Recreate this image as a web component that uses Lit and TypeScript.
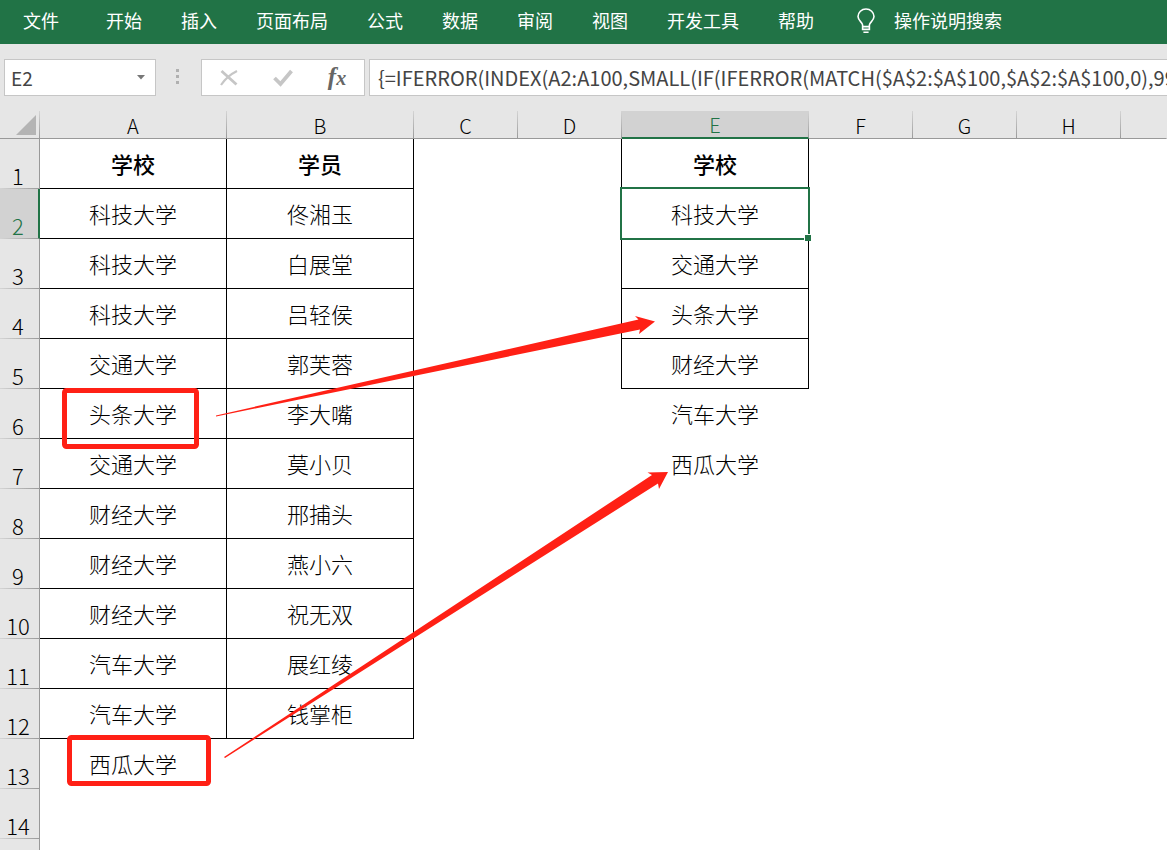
import { LitElement, html, css, nothing } from "lit";
import { customElement, property } from "lit/decorators.js";
import { classMap } from "lit/directives/class-map.js";

const COLUMNS = ["A", "B", "C", "D", "E", "F", "G", "H", ""];
const WIDE = new Set(["A", "B", "E"]);
const SELECTED = { column: "E", row: 2 };
const LABELLED_ROWS = 14;

const DATA: Record<string, string[]> = {
  A: ["学校", "科技大学", "科技大学", "科技大学", "交通大学", "头条大学", "交通大学", "财经大学", "财经大学", "财经大学", "汽车大学", "汽车大学", "西瓜大学"],
  B: ["学员", "佟湘玉", "白展堂", "吕轻侯", "郭芙蓉", "李大嘴", "莫小贝", "邢捕头", "燕小六", "祝无双", "展红绫", "钱掌柜"],
  E: ["学校", "科技大学", "交通大学", "头条大学", "财经大学", "汽车大学", "西瓜大学"],
};

@customElement("ribbon-tabs")
export class RibbonTabs extends LitElement {
  static styles = css`
    .tabs {
      display: flex;
      align-items: center;
      height: 44px;
      box-sizing: border-box;
      padding: 0 3px 4px;
      background: #217346;
      overflow: hidden;
    }
    .tab {
      flex: none;
      display: flex;
      align-items: center;
      margin: 0;
      border: 0;
      padding: 0 19px 0 20px;
      background: none;
      color: #fff;
      font: 18px/26px "Noto Sans CJK SC", sans-serif;
      white-space: nowrap;
    }
    .file {
      margin-right: 8px;
    }
    .search {
      gap: 19px;
      padding-left: 24px;
    }
    .bulb {
      width: 18px;
      height: 26px;
    }
  `;
  render() {
    const tabs = ["开始", "插入", "页面布局", "公式", "数据", "审阅", "视图", "开发工具", "帮助"];
    return html`<nav class="tabs">
      <button class="tab file">文件</button>
      ${tabs.map((t) => html`<button class="tab">${t}</button>`)}
      <button class="tab search">
        <svg class="bulb" viewBox="0 0 18 26" fill="none" stroke="#fff" stroke-width="1.6" aria-hidden="true">
          <path d="M5.6 19.600V18C5.600 15.600 1 13.600 1 9.600A8 7.600 0 0 1 17 9.600C17 13.600 12.400 15.600 12.400 18V19.600M5.600 19.600V22.400H12.400V19.600H5.600M6.400 25.200H11.600" />
        </svg>
        操作说明搜索
      </button>
    </nav>`;
  }
}

@customElement("formula-bar")
export class FormulaBar extends LitElement {
  @property() cell = "";
  @property() formula = "";
  static styles = css`
    .bar {
      display: flex;
      height: 67px;
      box-sizing: border-box;
      padding: 15px 0 15px 4px;
      background: #e6e6e6;
    }
    .box {
      display: flex;
      align-items: center;
      box-sizing: border-box;
      border: 1px solid #c6c6c6;
      background: #fff;
    }
    .name {
      width: 152px;
    }
    .text {
      flex: 1;
      min-width: 0;
      height: 100%;
      box-sizing: border-box;
      border: 0;
      padding: 0 0 0 8px;
      background: none;
      color: #444;
      font: 20px/26px "Noto Sans CJK SC", sans-serif;
      outline: 0;
    }
    .ref {
      padding-left: 6px;
      font-size: 19px;
    }
    .icon {
      display: flex;
      align-items: center;
      justify-content: center;
      border: 0;
      padding: 0;
      background: none;
    }
    .drop {
      width: 28px;
    }
    .dots {
      width: 45px;
      display: flex;
      flex-direction: column;
      align-items: center;
      justify-content: center;
      gap: 3px;
      padding: 0 2px 2px 0;
      box-sizing: border-box;
    }
    .dot {
      width: 3px;
      height: 3px;
      background: #b0b0b0;
    }
    .tools {
      width: 164px;
      margin-right: 4px;
    }
    .tools .icon {
      flex: 1;
    }
    .fx {
      align-items: baseline;
      color: #666;
      font: italic bold 25px/26px "Liberation Serif", serif;
    }
    .fx small {
      font-size: 20px;
    }
    .entry {
      flex: 1;
      min-width: 0;
      border-right: 0;
    }
  `;
  render() {
    return html`<div class="bar">
      <div class="box name">
        <input class="text ref" aria-label="名称框" .value=${this.cell} />
        <button class="icon drop" aria-label="展开名称框">
          <svg width="8" height="5" viewBox="0 0 8 5"><path d="M0 0H8L4 4.500Z" fill="#777" /></svg>
        </button>
      </div>
      <div class="dots"><i class="dot"></i><i class="dot"></i><i class="dot"></i></div>
      <div class="box tools">
        <button class="icon" aria-label="取消">
          <svg width="20" height="18" viewBox="0 0 20 18" fill="none" stroke="#c6c6c6">
            <path d="M2.500 2L17.500 15.500" stroke-width="2.800" /><path d="M18 2C12 5 6 10 2 16" stroke-width="2.200" />
          </svg>
        </button>
        <button class="icon" aria-label="输入">
          <svg width="20" height="18" viewBox="0 0 20 18" fill="none" stroke="#c6c6c6" stroke-width="3.800">
            <path d="M1.500 9L7.500 15L18.500 2" />
          </svg>
        </button>
        <button class="icon fx" aria-label="插入函数"><span>f</span><small>x</small></button>
      </div>
      <div class="box entry"><input class="text" aria-label="编辑栏" .value=${this.formula} /></div>
    </div>`;
  }
}

@customElement("sheet-grid")
export class SheetGrid extends LitElement {
  static styles = css`
    :host {
      display: block;
      position: relative;
      overflow: hidden;
      background: #fff;
    }
    .grid {
      width: 100%;
      table-layout: fixed;
      border-collapse: separate;
      border-spacing: 0;
      color: #000;
      font: 300 22px/26px "Noto Sans CJK SC", sans-serif;
    }
    .heads {
      width: 40px;
    }
    .wide {
      width: 187px;
    }
    .narrow {
      width: 104px;
    }
    th,
    td {
      box-sizing: border-box;
      padding: 0;
      border: 0 solid transparent;
      border-width: 0 1px 1px 0;
      text-align: center;
      vertical-align: middle;
    }
    td {
      padding-bottom: 2px;
    }
    .col,
    .corner {
      height: 28px;
      background: linear-gradient(#d4d4d4, #999) right / 1px 100% no-repeat #e6e6e6;
      background-origin: border-box;
      border-bottom-color: #999;
      font-size: 20px;
      font-weight: 300;
      line-height: 25px;
    }
    .col {
      padding-top: 2px;
    }
    .col:last-child {
      background-image: none;
    }
    .corner svg {
      display: block;
      margin: 4px 3px 3px auto;
    }
    .col.on {
      background-color: #d2d2d2;
      border-bottom: 2px solid #217346;
      line-height: 24px;
      color: #217346;
    }
    .row {
      height: 50px;
      background: linear-gradient(90deg, #d4d4d4, #999) bottom / 100% 1px no-repeat #e6e6e6;
      background-origin: border-box;
      border-right-color: #999;
      padding: 22px 3px 0 0;
      font-weight: 300;
    }
    .row.on {
      background-color: #d2d2d2;
      border-right: 2px solid #217346;
      padding-right: 2px;
      color: #217346;
    }
    .title {
      font-weight: 500;
    }
    .right {
      border-right-color: #000;
    }
    .bottom {
      border-bottom-color: #000;
    }
    .side {
      border-bottom-width: 0;
    }
    .active {
      position: relative;
    }
    .cursor {
      position: absolute;
      inset: -2px;
      border: 2px solid #217346;
    }
    .handle {
      position: absolute;
      right: -3px;
      bottom: -3px;
      width: 6px;
      height: 6px;
      border: 1px solid #fff;
      border-width: 1px 0 0 1px;
      background: #217346;
    }
    .marks {
      position: absolute;
      left: 0;
      top: 0;
      pointer-events: none;
    }
  `;

  private cell(column: string, row: number) {
    const text = DATA[column]?.[row - 1] ?? "";
    const lastRow = column === "E" ? 5 : 12;
    const framed = column in DATA && row <= lastRow;
    const side = column === "D" && row <= 5;
    const active = column === SELECTED.column && row === SELECTED.row;
    const classes = {
      title: row === 1,
      right: framed || side,
      bottom: framed,
      side,
      active,
    };
    return html`<td class=${classMap(classes)}>${text}${active
        ? html`<span class="cursor"><span class="handle"></span></span>`
        : nothing}</td>`;
  }

  render() {
    const rows = Array.from({ length: LABELLED_ROWS + 1 }, (_, i) => i + 1);
    return html`<table class="grid">
        <colgroup>
          <col class="heads" />
          ${COLUMNS.map((c) => html`<col class=${WIDE.has(c) ? "wide" : c ? "narrow" : ""} />`)}
        </colgroup>
        <thead>
          <tr>
            <th class="corner" aria-label="全选">
              <svg width="20" height="20" viewBox="0 0 20 20"><path d="M20 0V20H0Z" fill="#b4b4b4" /></svg>
            </th>
            ${COLUMNS.map((c) => html`<th scope="col" class=${classMap({ col: true, on: c === SELECTED.column })}>${c}</th>`)}
          </tr>
        </thead>
        <tbody>
          ${rows.map(
            (r) => html`<tr>
              <th scope="row" class=${classMap({ row: true, on: r === SELECTED.row })}>${r <= LABELLED_ROWS ? r : nothing}</th>
              ${COLUMNS.map((c) => this.cell(c, r))}
            </tr>`
          )}
        </tbody>
      </table>
      <svg class="marks" width="700" height="700" viewBox="0 111 700 700" fill="#ff2015" aria-hidden="true">
        <rect x="64.500" y="390.500" width="132" height="56" rx="2" fill="none" stroke="#ff2015" stroke-width="5" />
        <rect x="69.500" y="737.500" width="139" height="46" rx="2" fill="none" stroke="#ff2015" stroke-width="5" />
        <path d="M216 415.500L638.500 319.500L635 316L655 321.500L639 334L640 329.500L216 416.500Z" />
        <path d="M224 757L652 475L647.500 472.500L668 472L659 489L658 483.500L225 758Z" />
      </svg>`;
  }
}

@customElement("app-root")
export class AppRoot extends LitElement {
  static styles = css`
    :host {
      display: flex;
      flex-direction: column;
      height: 100vh;
      overflow: hidden;
    }
    .sheet {
      flex: 1;
      min-height: 0;
    }
  `;
  render() {
    return html`<ribbon-tabs></ribbon-tabs>
      <formula-bar
        cell="E2"
        formula="{=IFERROR(INDEX(A2:A100,SMALL(IF(IFERROR(MATCH($A$2:$A$100,$A$2:$A$100,0),99"
      ></formula-bar>
      <sheet-grid class="sheet"></sheet-grid>`;
  }
}
